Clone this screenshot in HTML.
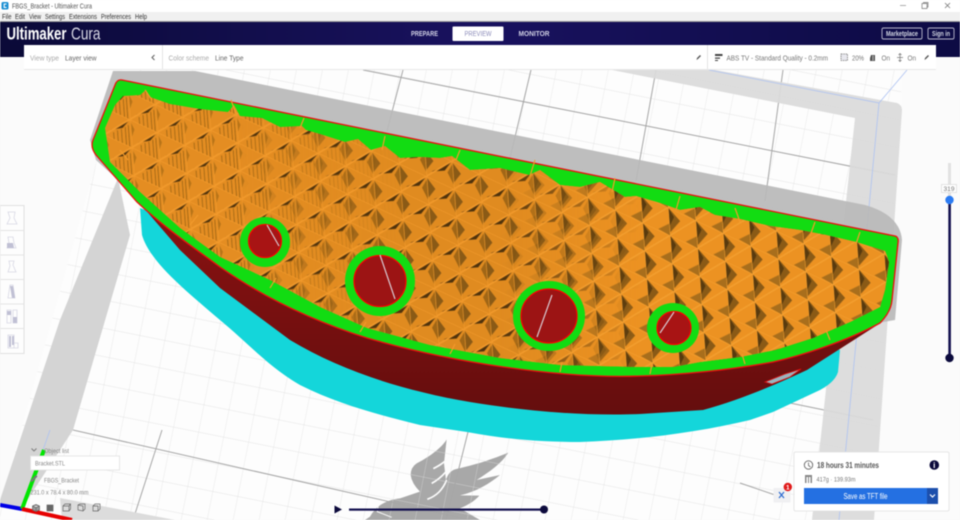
<!DOCTYPE html>
<html><head><meta charset="utf-8"><title>FBGS_Bracket - Ultimaker Cura</title>
<style>
html,body{margin:0;padding:0;width:960px;height:520px;overflow:hidden;background:#fafafa}
svg{display:block;filter:blur(.4px)}
text{font-family:"Liberation Sans",sans-serif}
</style></head><body>
<svg width="960" height="520" viewBox="0 0 960 520" xmlns="http://www.w3.org/2000/svg">
<defs>
<pattern id="minor" patternUnits="userSpaceOnUse" width="100" height="100" patternTransform="matrix(.25 .05 -.054 .272 524 101)">
<path d="M0 0H100M0 0V100" stroke="#dcdcdc" stroke-width="2.5" fill="none"/>
</pattern>
<pattern id="inf1" patternUnits="userSpaceOnUse" width="100" height="100" patternTransform="matrix(.275 .128 .02 .28 723 233)">
<rect width="100" height="100" fill="#e48d22"/>
<path d="M100 0L60 42L24 72L70 44Z" fill="#4e320c"/>
<path d="M0 6L3 60L14 30Z" fill="#b87418"/>
<path d="M35 100V76M50 100V62M65 100V50M80 100V36M92 100V24" stroke="#9c6414" stroke-width="3"/>
<path d="M0 0H100M0 0V100M0 100L100 0" stroke="#f29a2c" stroke-width="5" fill="none"/>
</pattern>
<pattern id="inf2" patternUnits="userSpaceOnUse" width="100" height="100" patternTransform="matrix(.275 .128 .02 .28 723 233)">
<rect width="100" height="100" fill="#e08b20"/>
<path d="M100 0L56 44L20 74L70 48Z" fill="#4e320c"/>
<path d="M0 4L2 76L30 32Z" fill="#8a5a16"/>
<path d="M100 12L100 84L80 50Z" fill="#a06616"/>
<path d="M0 0H100M0 0V100M0 100L100 0" stroke="#f29a2c" stroke-width="4.5" fill="none"/>
</pattern>
<pattern id="inf3" patternUnits="userSpaceOnUse" width="100" height="100" patternTransform="matrix(.275 .128 .02 .28 723 233)">
<rect width="100" height="100" fill="#ec9222"/>
<path d="M0 0L2 88L42 30Z" fill="#8a5a16"/>
<path d="M0 0L2 64L20 26Z" fill="#583a0e"/>
<path d="M100 100L58 96L100 58Z" fill="#a86e1c"/>
<path d="M0 0H100M0 0V100M0 100L100 0" stroke="#f4a030" stroke-width="4" fill="none"/>
</pattern>
<linearGradient id="g2" gradientUnits="userSpaceOnUse" x1="240" x2="400" y1="0" y2="0"><stop offset="0" stop-color="#000"/><stop offset="1" stop-color="#fff"/></linearGradient>
<linearGradient id="g3" gradientUnits="userSpaceOnUse" x1="500" x2="640" y1="0" y2="0"><stop offset="0" stop-color="#000"/><stop offset="1" stop-color="#fff"/></linearGradient>
<mask id="m2" maskUnits="userSpaceOnUse" x="0" y="0" width="960" height="520"><rect width="960" height="520" fill="url(#g2)"/></mask>
<mask id="m3" maskUnits="userSpaceOnUse" x="0" y="0" width="960" height="520"><rect width="960" height="520" fill="url(#g3)"/></mask>
<linearGradient id="hdr" x1="0" x2="1" y1="0" y2="0">
<stop offset="0" stop-color="#0b0a38"/><stop offset=".5" stop-color="#19125f"/><stop offset="1" stop-color="#0d0b44"/>
</linearGradient>
<linearGradient id="red" x1="0" x2="0" y1="0" y2="1">
<stop offset="0" stop-color="#8c1212"/><stop offset="1" stop-color="#650e0e"/>
</linearGradient>
<clipPath id="plate"><path d="M125 60L901 60L901 105L872 520H0L0 505Z"/></clipPath>
<clipPath id="top"><path d="M123 96L140 95L146 90L150 97L170 104L200 109L228 112L234 105L240 116L262 118L280 127L302 126L306 130L320 134L345 142L358 139L371 150L385 146L400 158L420 157L440 158L452 156L470 170L500 168L529 175L540 170L560 185L580 187L600 182L625 197L636 196L660 203L680 210L700 207L715 215L740 219L770 226L800 230L826 235L856 242L885 251L887 256L889 262L885 290L880 307L850 322L813 338L775 350L740 357L700 362L673 367L640 367L560 365L500 358L430 345L367 328L320 307L270 280L220 257L180 228L140 192L110 162L105 128L115 105Z"/></clipPath>
</defs>

<!-- floor -->
<rect width="960" height="520" fill="#fbfbfb"/>
<g clip-path="url(#plate)">
 <rect width="960" height="520" fill="#fdfdfd"/>
 <!-- eagle logo -->
 <g transform="translate(320 430) scale(.3333)">
  <path d="M380 28C365 55 320 85 290 100Q272 112 272 135Q275 160 300 185L240 205C200 210 170 225 150 260L135 270H480L420 235C445 225 465 212 478 197L420 196C470 185 510 160 540 135L470 150C510 125 545 100 565 68C500 95 450 108 405 118Q385 125 378 150L372 100Z" fill="#a8a8a8"/>
  <path d="M388 82C370 100 355 108 340 116M378 125C365 140 350 152 335 160M380 150C368 180 350 197 322 208" stroke="#fcfcfc" stroke-width="5" fill="none"/>
  <path d="M175 225L172 245L215 262" stroke="#fcfcfc" stroke-width="3" fill="none"/>
 </g>
 <rect width="960" height="520" fill="url(#minor)"/>
</g>
<!-- major grid lines -->
<path d="M363 70L895 175M73 430L470 520M403 70L387 131M531 70L510 158M656 70L636 181M783 70L765 201M162 430L133 520M468 432L446 520M740 483L775 495M790 403L873 420" stroke="#a6a6a6" stroke-width="1" fill="none"/>

<!-- plate bands -->
<path d="M612 70H715L897 103Q902 105 902 110L874 520H812L855 118Z" fill="#dadada" opacity=".92"/>
<path d="M118 178L130 235L73 430L22 508L0 505V500L60 320Z" fill="#d4d4d4"/>
<path d="M60 498L175 520H62Z" fill="#dcdcdc"/>
<path d="M709 70L879 103L839 520M879 103L907 70M50 430L43 450" stroke="#adc2f2" stroke-width=".8" fill="none"/>

<!-- shadow -->
<path d="M113 71H195L865 205Q900 215 902 240L895 320L780 340L140 200L96 160L90 140Z" fill="#b9b9b9" opacity=".92"/>

<!-- axes -->
<path d="M0 505L22 509" stroke="#0000e6" stroke-width="4"/>
<path d="M22 509L44 450" stroke="#00e600" stroke-width="4"/>
<path d="M22 509L72 520" stroke="#e60000" stroke-width="4"/>

<!-- raft -->
<path d="M140 208L142 235C150 262 185 290 220 320C250 345 270 368 300 385C340 405 380 415 420 425L467 432C510 440 545 442 580 442C640 440 700 432 750 420L773 412L820 390Q835 382 838 372L840 350L700 300L200 230Z" fill="#14d6da"/>
<!-- body -->
<path d="M137 200L180 250L220 288L290 340C340 370 400 390 470 402C530 412 590 416 640 414L703 410C740 400 775 385 807 370L882 322L860 300L300 220Z" fill="url(#red)"/>
<path d="M765 382L785 374L801 369L790 377L772 384Z" fill="#9ab4be" stroke="#e01010" stroke-width=".8"/>
<!-- top face -->
<path d="M122 80L895 236Q899 237 898 243L892 300Q891 312 880 323C845 342 800 356 773 362C730 370 680 375 640 376C560 379 450 362 367 338C310 320 260 295 220 267C190 245 165 228 137 202L96 155Q90 147 93 140L115 85Q117 79 122 80Z" fill="#12dc12" stroke="#ee0e0e" stroke-width="1.3"/>
<!-- infill -->
<g clip-path="url(#top)">
 <rect x="90" y="80" width="820" height="300" fill="url(#inf1)"/>
 <rect x="90" y="80" width="820" height="300" fill="url(#inf2)" mask="url(#m2)"/>
 <rect x="90" y="80" width="820" height="300" fill="url(#inf3)" mask="url(#m3)"/>
</g>
<!-- infill tips poking into the green -->
<path d="M145 90L152 100M231 100L236 114M304 118L300 128M385 136L382 150M460 150L456 160M535 160L530 176M615 178L612 192M680 196L676 210M735 208L740 222M815 222L810 236M860 232L856 244M120 150L128 160M190 225L198 215M270 288L276 278M360 332L366 322M450 354L455 344M560 372L562 362M650 374L652 364M745 364L742 354M830 340L826 330" stroke="#f29a2c" stroke-width="1.2" fill="none"/>
<!-- holes -->
<ellipse cx="265" cy="242" rx="25" ry="25" fill="#12dc12"/>
<ellipse cx="265" cy="241" rx="16.5" ry="16.5" fill="#a81414" stroke="#f00" stroke-width="1.2"/>
<path d="M267 225L279 246" stroke="#d8c8d0" stroke-width="1.2"/>
<ellipse cx="380" cy="281" rx="35" ry="35" fill="#12dc12"/>
<ellipse cx="380" cy="281" rx="26" ry="25.5" fill="#9c1414" stroke="#f00" stroke-width="1.2"/>
<path d="M380 255L395 299" stroke="#d8c8d0" stroke-width="1.2"/>
<ellipse cx="549" cy="316" rx="36" ry="35" fill="#12dc12"/>
<ellipse cx="549" cy="316" rx="28" ry="27" fill="#9c1414" stroke="#f00" stroke-width="1.2"/>
<path d="M552 295L537 337" stroke="#d8c8d0" stroke-width="1.2"/>
<ellipse cx="673" cy="328" rx="26" ry="25" fill="#12dc12"/>
<ellipse cx="674" cy="328" rx="17" ry="16.5" fill="#a81414" stroke="#f00" stroke-width="1.2"/>
<path d="M674 312L660 333" stroke="#d8c8d0" stroke-width="1.2"/>

<!-- title + menu bars -->
<rect width="960" height="12" fill="#fff"/>
<rect y="12" width="960" height="9.5" fill="#f0f0f0"/>
<rect y="21" width="960" height="1" fill="#9a9a9a"/>
<rect x="1.5" y="2" width="7" height="7.5" rx="1.5" fill="#1b8fd2"/>
<path d="M6.5 4H4.2V7.5H6.5" stroke="#fff" stroke-width="1.1" fill="none"/>
<text x="12" y="8.6" font-size="7.4" fill="#555" textLength="80" lengthAdjust="spacingAndGlyphs">FBGS_Bracket - Ultimaker Cura</text>
<g font-size="7.2" fill="#333">
 <text x="2" y="19" textLength="9.5" lengthAdjust="spacingAndGlyphs">File</text>
 <text x="15" y="19" textLength="10" lengthAdjust="spacingAndGlyphs">Edit</text>
 <text x="29" y="19" textLength="12" lengthAdjust="spacingAndGlyphs">View</text>
 <text x="45" y="19" textLength="20" lengthAdjust="spacingAndGlyphs">Settings</text>
 <text x="69" y="19" textLength="28" lengthAdjust="spacingAndGlyphs">Extensions</text>
 <text x="101" y="19" textLength="30" lengthAdjust="spacingAndGlyphs">Preferences</text>
 <text x="135" y="19" textLength="12" lengthAdjust="spacingAndGlyphs">Help</text>
</g>
<path d="M900 5.5H906" stroke="#999" stroke-width=".8"/>
<path d="M922 3.5H927V8.5H922ZM923.5 3.5V2.5H928V7H927" stroke="#777" stroke-width=".7" fill="none"/>
<path d="M945 3L950 8M950 3L945 8" stroke="#777" stroke-width=".8"/>

<!-- header -->
<rect y="22" width="960" height="23" fill="url(#hdr)"/>
<rect y="45" width="24" height="12" fill="#0b0a38"/>
<rect x="936" y="45" width="24" height="12" fill="#0d0b44"/>
<text x="6.5" y="39.5" font-size="17.5" font-weight="bold" fill="#fff" textLength="60" lengthAdjust="spacingAndGlyphs">Ultimaker</text>
<text x="71" y="39.5" font-size="17.5" fill="#d8d8e4" textLength="29.5" lengthAdjust="spacingAndGlyphs">Cura</text>
<text x="411" y="36" font-size="7.4" font-weight="bold" fill="#d0d0e4" textLength="27" lengthAdjust="spacingAndGlyphs">PREPARE</text>
<rect x="452.5" y="26.5" width="51" height="14.5" rx="1" fill="#fff"/>
<text x="464.5" y="36" font-size="7.4" fill="#8c8cba" textLength="27" lengthAdjust="spacingAndGlyphs">PREVIEW</text>
<text x="518.5" y="36" font-size="7.4" font-weight="bold" fill="#d0d0e4" textLength="31" lengthAdjust="spacingAndGlyphs">MONITOR</text>
<rect x="882" y="28" width="40" height="11" rx="1.5" fill="none" stroke="#b8b8cc" stroke-width=".9"/>
<text x="886" y="36.2" font-size="7" font-weight="bold" fill="#d4d8e4" textLength="32" lengthAdjust="spacingAndGlyphs">Marketplace</text>
<rect x="928" y="28" width="26" height="11" rx="1.5" fill="none" stroke="#b8b8cc" stroke-width=".9"/>
<text x="932" y="36.2" font-size="7" font-weight="bold" fill="#d4d8e4" textLength="18" lengthAdjust="spacingAndGlyphs">Sign in</text>

<!-- settings strip -->
<rect x="24" y="45" width="912" height="24.5" fill="#fff"/>
<rect x="24" y="69" width="912" height="1" fill="#e8e8e8"/>
<path d="M162.5 45V69M707.5 45V69" stroke="#e4e4e4"/>
<g font-size="7.2">
 <text x="30" y="60.3" fill="#aaa" textLength="29" lengthAdjust="spacingAndGlyphs">View type</text>
 <text x="65" y="60.3" fill="#666" textLength="31.5" lengthAdjust="spacingAndGlyphs">Layer view</text>
 <text x="168.5" y="60.3" fill="#aaa" textLength="40.5" lengthAdjust="spacingAndGlyphs">Color scheme</text>
 <text x="215" y="60.3" fill="#666" textLength="28.5" lengthAdjust="spacingAndGlyphs">Line Type</text>
 <text x="726.5" y="60.3" fill="#777" textLength="101.5" lengthAdjust="spacingAndGlyphs">ABS TV - Standard Quality - 0.2mm</text>
 <text x="852" y="60.3" fill="#777" textLength="12" lengthAdjust="spacingAndGlyphs">20%</text>
 <text x="881.5" y="60.3" fill="#777" textLength="8.5" lengthAdjust="spacingAndGlyphs">On</text>
 <text x="907.5" y="60.3" fill="#777" textLength="8.5" lengthAdjust="spacingAndGlyphs">On</text>
</g>
<path d="M154.5 55L152 57.5L154.5 60" stroke="#666" stroke-width="1.1" fill="none"/>
<path d="M696.5 60L697 58L700 55L701 56L698 59Z" fill="#555"/>
<path d="M924.5 60L925 58L928 55L929 56L926 59Z" fill="#555"/>
<path d="M715 54H722.5V56H715ZM715 57.5H720V58.8H715ZM715 60H718V61H715Z" fill="#444"/>
<rect x="841" y="54" width="6.5" height="6.5" fill="#e8e8ee" stroke="#777" stroke-width=".8" stroke-dasharray="1.5 .8"/>
<path d="M871 55H875V61H870V58Z" fill="#555"/><path d="M873 55.5V60.5" stroke="#fff" stroke-width=".6"/>
<path d="M900 53.5V61.5M897 57.5H903M898.5 55L900 53.5L901.5 55M898.5 60L900 61.5L901.5 60" stroke="#777" stroke-width=".7" fill="none"/>

<!-- left tool bar -->
<rect x="0" y="205.5" width="24" height="148" fill="#fdfdfd" stroke="#e0e0e0"/>
<path d="M0 230.5H24M0 255H24M0 279.5H24M0 304H24M0 328.5H24" stroke="#e4e4e4"/>
<g fill="none" stroke="#d8d8e4" stroke-width=".8">
 <path d="M8 212L15 212L14 218L17 224H7L10 218Z"/>
 <path d="M8 237H13L14 243L16 248H7L9 243Z"/>
 <path d="M9 261H14L13 265L16 272H8L10 266Z"/>
 <path d="M10 285H13L15 298H8Z"/>
 <path d="M7 310H11V323H7ZM13 310H17V323H13Z"/>
 <path d="M8 335H14V348H8ZM14 343H18V348H14Z"/>
</g>
<g fill="#c0c0d4">
 <path d="M7 243L13 243L14 248H7Z"/>
 <path d="M10 286H13L15 298H12Z"/>
 <path d="M7 311H11V315H7ZM13 317H17V323H13Z"/>
 <path d="M9 336H11V347H9ZM12 336H14V345H12Z"/>
</g>

<!-- layer slider -->
<rect x="948" y="163" width="3" height="37" fill="#e2e2e2"/>
<rect x="948.3" y="200" width="2.6" height="158" fill="#13104e"/>
<rect x="941.5" y="184.5" width="15" height="8" fill="#fff" stroke="#ddd" stroke-width=".8"/>
<text x="949" y="191" font-size="6.6" fill="#777" text-anchor="middle">319</text>
<circle cx="949.5" cy="200" r="4.2" fill="#2b7bf2"/>
<circle cx="949.5" cy="358" r="4.2" fill="#0b0a3c"/>

<!-- simulation -->
<path d="M334.5 505.5V513.5L342 509.5Z" fill="#0c0a3c"/>
<rect x="349" y="508.5" width="195" height="2.2" fill="#13104e"/>
<circle cx="544" cy="509.5" r="4" fill="#0c0a3c"/>

<!-- object list -->
<path d="M31.5 448.5L34 451L36.5 448.5" stroke="#777" stroke-width=".9" fill="none"/>
<text x="44" y="453" font-size="6.6" fill="#888" textLength="25" lengthAdjust="spacingAndGlyphs">Object list</text>
<rect x="30.5" y="456" width="89" height="14" fill="#fff" stroke="#e2e2e2" stroke-width=".8"/>
<text x="35" y="465.5" font-size="6.8" fill="#888" textLength="30" lengthAdjust="spacingAndGlyphs">Bracket.STL</text>
<path d="M30.5 482L31 480L36 475L37.5 476.5L32.5 481.5Z" fill="#777"/>
<text x="44" y="482.5" font-size="6.6" fill="#888" textLength="35" lengthAdjust="spacingAndGlyphs">FBGS_Bracket</text>
<text x="30.5" y="494.5" font-size="6.6" fill="#888" textLength="58" lengthAdjust="spacingAndGlyphs">231.0 x 78.4 x 80.0 mm</text>
<g stroke="#666" stroke-width=".7" fill="none">
 <path d="M32.5 506L36 504.5L39.5 506V510L36 511.5L32.5 510ZM32.5 506L36 507.5L39.5 506M36 507.5V511.5" fill="#999"/>
 <rect x="47" y="505" width="6" height="6" fill="#666"/>
 <path d="M63 506H69V511H63ZM63 506L65 504H70.5L69 506M70.5 504V509L69 511"/>
 <path d="M78 505L83 506V511L78 510ZM78 505L80 504H85V509L83 511"/>
 <path d="M93 506H98V511H93ZM93 506L95 504H100V509L98 511"/>
</g>

<!-- print panel -->
<rect x="773.5" y="488" width="17" height="14.5" fill="#f0f0f2"/>
<path d="M779 492L784 498M784 492L779 498" stroke="#2a6ad0" stroke-width="1.2"/>
<circle cx="787.8" cy="487" r="4.2" fill="#e01a1a"/>
<text x="787.8" y="489.4" font-size="6.4" font-weight="bold" fill="#fff" text-anchor="middle">1</text>
<rect x="794" y="452" width="155" height="59" rx="1.5" fill="#fff" stroke="#e0e0e0" stroke-width=".8"/>
<circle cx="808.5" cy="465" r="4.2" fill="none" stroke="#666" stroke-width=".9"/>
<path d="M808.5 462.5V465.5L810.5 467" stroke="#666" stroke-width=".8" fill="none"/>
<text x="817" y="468" font-size="7.8" font-weight="bold" fill="#555" textLength="62" lengthAdjust="spacingAndGlyphs">18 hours 31 minutes</text>
<circle cx="934.3" cy="465" r="4.8" fill="#0c0a3c"/>
<text x="934.3" y="468" font-size="8" font-weight="bold" fill="#fff" text-anchor="middle">i</text>
<path d="M805 475H812V483H810.5V477H809V483H808V477H806.5V483H805Z" fill="#888"/>
<text x="816.5" y="481.5" font-size="6.8" fill="#777" textLength="39" lengthAdjust="spacingAndGlyphs">417g · 139.93m</text>
<rect x="804" y="488" width="134" height="16" fill="#2470e2"/>
<rect x="927" y="488" width="11" height="16" fill="#1c4fac"/>
<path d="M930 494.5L932.5 497L935 494.5" stroke="#fff" stroke-width="1.2" fill="none"/>
<text x="843.5" y="498.8" font-size="7.8" fill="#fff" textLength="44" lengthAdjust="spacingAndGlyphs">Save as TFT file</text>
</svg>
</body></html>
